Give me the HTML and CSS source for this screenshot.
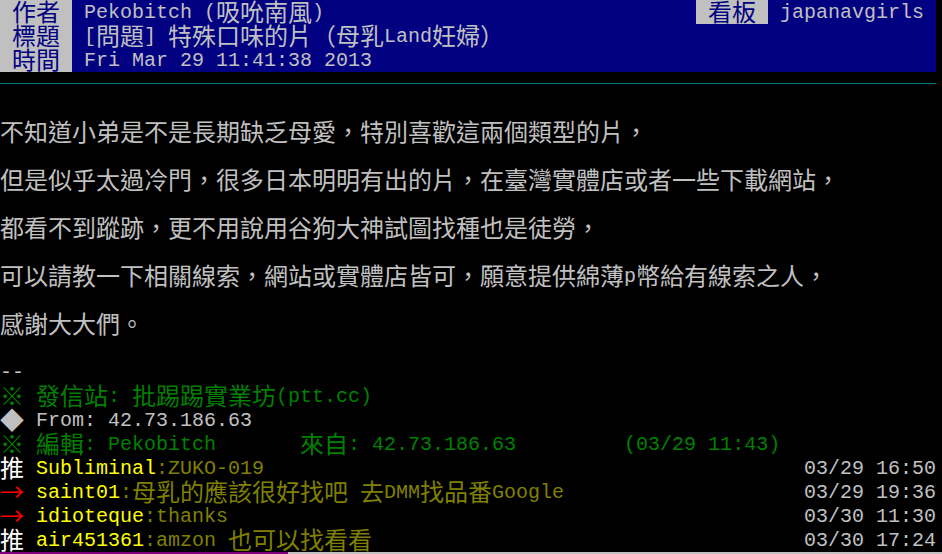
FILE: index.html
```html
<!DOCTYPE html>
<html lang="zh-Hant">
<head>
<meta charset="utf-8">
<title>[問題] 特殊口味的片（母乳Land妊婦） - japanavgirls</title>
<link rel="stylesheet" href="styles.css">
</head>
<body>
<div class="term">
  <div class="hdr">
    <div class="lab"><span class="w">作者</span></div>
    <div class="val">Pekobitch (<span class="w">吸吮南風</span>)</div>
    <div class="lab"><span class="w">看板</span></div>
    <div class="board">japanavgirls</div>
  </div>
  <div class="hdr">
    <div class="lab"><span class="w">標題</span></div>
    <div class="val">[<span class="w">問題</span>] <span class="w">特殊口味的片（母乳</span>Land<span class="w">妊婦）</span></div>
  </div>
  <div class="hdr">
    <div class="lab"><span class="w">時間</span></div>
    <div class="val">Fri Mar 29 11:41:38 2013</div>
  </div>
  <div class="line"><div class="rule"></div></div>
  <div class="line"></div>
  <div class="line"><span class="w">不知道小弟是不是長期缺乏母愛，特別喜歡這兩個類型的片，</span></div>
  <div class="line"></div>
  <div class="line"><span class="w">但是似乎太過冷門，很多日本明明有出的片，在臺灣實體店或者一些下載網站，</span></div>
  <div class="line"></div>
  <div class="line"><span class="w">都看不到蹤跡，更不用說用谷狗大神試圖找種也是徒勞，</span></div>
  <div class="line"></div>
  <div class="line"><span class="w">可以請教一下相關線索，網站或實體店皆可，願意提供綿薄</span>p<span class="w">幣給有線索之人，</span></div>
  <div class="line"></div>
  <div class="line"><span class="w">感謝大大們。</span></div>
  <div class="line"></div>
  <div class="line">--</div>
  <div class="line g"><span class="w mk">※</span> <span class="w">發信站</span>: <span class="w">批踢踢實業坊</span>(ptt.cc)</div>
  <div class="line"><span class="w mk">◆</span> From: 42.73.186.63</div>
  <div class="line g"><span class="w mk">※</span> <span class="w">編輯</span>: Pekobitch       <span class="w">來自</span>: 42.73.186.63         (03/29 11:43)</div>
  <div class="line push">
    <span class="pl"><span class="w mk tui">推</span> <span class="uid">Subliminal</span><span class="msg">:ZUKO-019</span></span>
    <span class="date">03/29 16:50</span>
  </div>
  <div class="line push">
    <span class="pl"><span class="w mk arr">→</span> <span class="uid">saint01</span><span class="msg">:<span class="w">母乳的應該很好找吧</span> <span class="w">去</span>DMM<span class="w">找品番</span>Google</span></span>
    <span class="date">03/29 19:36</span>
  </div>
  <div class="line push">
    <span class="pl"><span class="w mk arr">→</span> <span class="uid">idioteque</span><span class="msg">:thanks</span></span>
    <span class="date">03/30 11:30</span>
  </div>
  <div class="line push">
    <span class="pl"><span class="w mk tui">推</span> <span class="uid">air451361</span><span class="msg">:amzon <span class="w">也可以找看看</span></span></span>
    <span class="date">03/30 17:24</span>
  </div>
  <div class="status"><div class="st1"></div><div class="st2"></div></div>
</div>
</body>
</html>
```
FILE: styles.css
```css
html, body {
  margin: 0;
  padding: 0;
  background: #000;
  overflow: hidden;
}

.term {
  width: 942px;
  height: 554px;
  overflow: hidden;
  background: #000;
  color: #c0c0c0;
  font-family: "Liberation Mono", monospace;
  font-size: 20px;
  line-height: 24px;
}

.line {
  box-sizing: border-box;
  height: 24px;
  padding-top: 1px;
  white-space: pre;
}

.w {
  font-family: "Noto Sans CJK TC", sans-serif;
  font-size: 24px;
  line-height: 20px;
  vertical-align: top;
}

.mk {
  display: inline-block;
  width: 24px;
  text-align: center;
}

.hdr {
  display: flex;
  width: 936px;
  height: 24px;
  background: #000080;
  color: #c0c0c0;
  white-space: pre;
}

.lab,
.val,
.board {
  box-sizing: border-box;
  padding-top: 1px;
}

.lab {
  width: 72px;
  background: #c0c0c0;
  color: #000080;
  text-align: center;
}

.val {
  flex: 1;
  padding-left: 12px;
}

.board {
  width: 168px;
  padding-left: 12px;
}

.line .rule {
  width: 936px;
  height: 12px;
  margin-top: -1px;
  border-bottom: 1px solid #008080;
  box-sizing: border-box;
}

.g {
  color: #008000;
}

.push {
  display: flex;
  justify-content: space-between;
  width: 936px;
}

.pl {
  white-space: pre;
}

.tui {
  color: #ffffff;
}

.arr {
  color: #ff0000;
}

.uid {
  color: #ffff00;
}

.msg {
  color: #808000;
}

.date {
  color: #c0c0c0;
}

.status {
  display: flex;
  height: 24px;
}

.st1 {
  width: 288px;
  background: #800080;
}

.st2 {
  flex: 1;
  background: #c0c0c0;
}
```
